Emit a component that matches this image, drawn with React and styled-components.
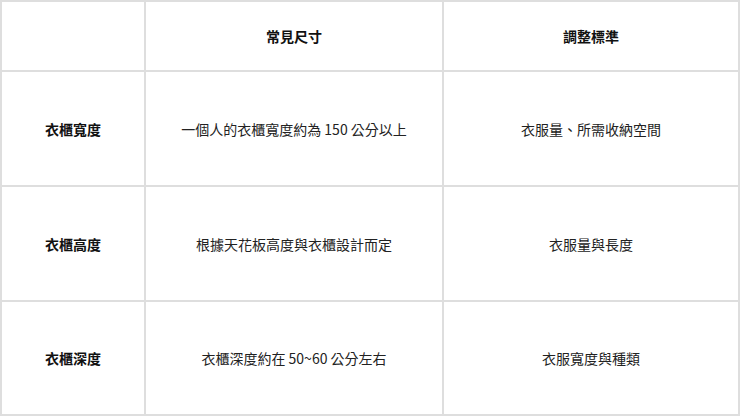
import React from "react";
import styled, { createGlobalStyle } from "styled-components";

const GlobalStyle = createGlobalStyle`
    html, body {
        margin: 0;
        padding: 0;
        background: #ffffff;
    }
    body {
        font-family: "Noto Sans CJK TC", "Noto Sans", sans-serif;
        color: #1f1f1f;
    }
`;

const Grid = styled.div`
    display: grid;
    grid-template-columns: 142px 296px 294px;
    grid-template-rows: 68px 113px 113px 112px;
    gap: 2px;
    padding: 2px;
    width: 740px;
    height: 416px;
    box-sizing: border-box;
    background: #dedede;
`;

const Cell = styled.div`
    display: flex;
    align-items: center;
    justify-content: center;
    background: #ffffff;
    font-size: 14px;
    line-height: 20px;
    font-weight: ${(p) => (p.$bold ? 700 : 400)};
    color: ${(p) => (p.$bold ? "#111111" : "#222222")};
    text-align: center;
`;

const headers = ["", "常見尺寸", "調整標準"];

const rows = [
    ["衣櫃寬度", "一個人的衣櫃寬度約為 150 公分以上", "衣服量、所需收納空間"],
    ["衣櫃高度", "根據天花板高度與衣櫃設計而定", "衣服量與長度"],
    ["衣櫃深度", "衣櫃深度約在 50~60 公分左右", "衣服寬度與種類"],
];

export default () => {
    return (
        <>
            <GlobalStyle />
            <Grid>
                {headers.map((h, i) => (
                    <Cell key={`h${i}`} $bold>
                        {h}
                    </Cell>
                ))}
                {rows.map((row) =>
                    row.map((text, i) => (
                        <Cell key={`${row[0]}-${i}`} $bold={i === 0}>
                            {text}
                        </Cell>
                    )),
                )}
            </Grid>
        </>
    );
};
